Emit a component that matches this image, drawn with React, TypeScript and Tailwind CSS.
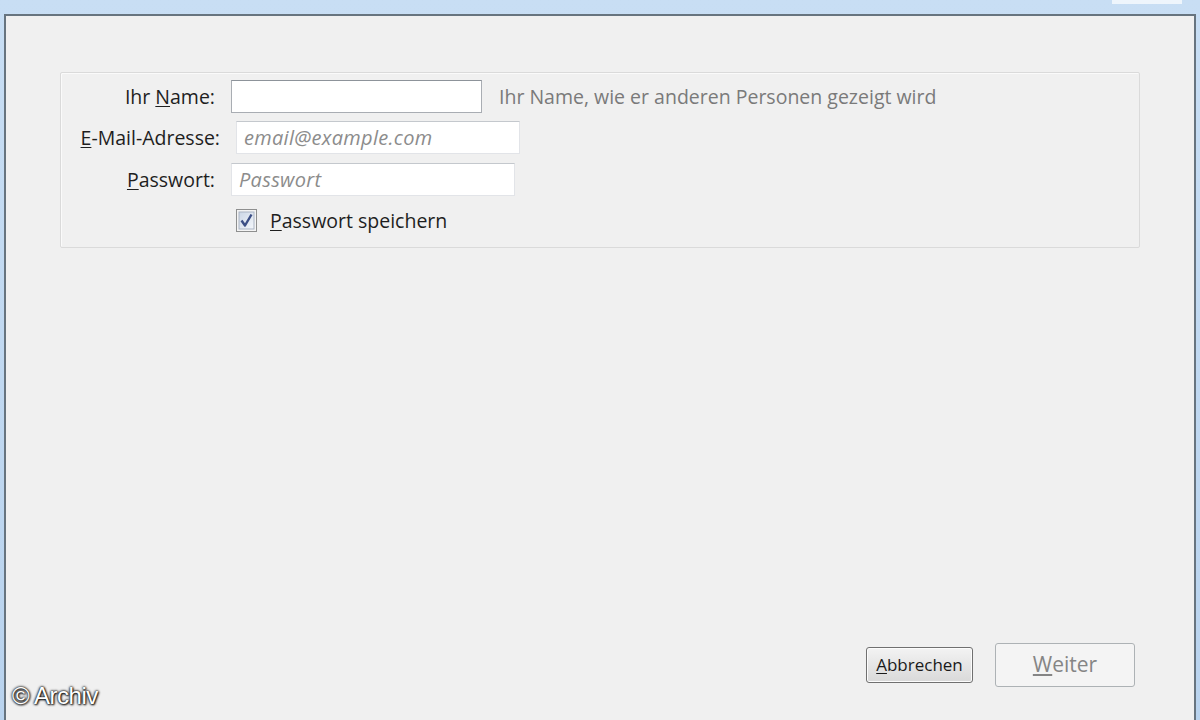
import React from "react";

const ui = { fontFamily: '"Open Sans", "Noto Sans", sans-serif' };

function Field({ labelW, gap, inputW, label, ul, rest, placeholder, focused }: {
  labelW: string; gap: string; inputW: string; label: string; ul: string; rest: string; placeholder?: string; focused?: boolean;
}) {
  return (
    <div className="flex items-center h-[33px]">
      <div className={`${labelW} text-right text-[19.5px] text-[#1e1e1e] leading-none whitespace-nowrap`}>
        {label}<span className="underline underline-offset-2">{ul}</span>{rest}
      </div>
      <div
        className={`${gap} ${inputW} h-[33px] bg-white flex items-center px-[7px] border ${
          focused ? "border-[#a9adb3] border-t-[#8d939a]" : "border-[#e2e4e8] border-t-[#c4c8cd]"
        }`}
      >
        {placeholder && <span className="text-[20px] italic text-[#8c8c8c] leading-none tracking-[0.3px]">{placeholder}</span>}
      </div>
    </div>
  );
}

export default function App() {
  return (
    <div
      className="relative w-[1200px] h-[720px] overflow-hidden bg-gradient-to-b from-[#c8def4] to-[#b9d3ee]"
      style={ui}
    >
      {/* title strip */}
      <div className="h-[14px] flex justify-end">
        <div className="w-[70px] h-[4px] mr-[18px] bg-[#eef5fc]" />
      </div>

      {/* dialog body */}
      <div className="ml-[4px] w-[1192px] h-[706px] border-l-2 border-t-2 border-r-2 border-[#67747f] bg-[#f0f0f0] pt-[56px] pl-[54px]">
        {/* form box */}
        <div className="w-[1080px] h-[176px] border border-[#dadada] rounded-[2px] shadow-[inset_1px_1px_0_#fafafa] pt-[7px] flex flex-col gap-[8px]">
          <div className="flex items-center">
            <Field labelW="w-[154px]" gap="ml-[16px]" inputW="w-[251px]" label="Ihr " ul="N" rest="ame:" focused />
            <span className="ml-[17px] text-[19.5px] text-[#7a7a7a] leading-none whitespace-nowrap">
              Ihr Name, wie er anderen Personen gezeigt wird
            </span>
          </div>
          <Field labelW="w-[159px]" gap="ml-[16px]" inputW="w-[284px]" label="" ul="E" rest="-Mail-Adresse:" placeholder="email@example.com" />
          <div className="mt-[1px]">
            <Field labelW="w-[154px]" gap="ml-[16px]" inputW="w-[284px]" label="" ul="P" rest="asswort:" placeholder="Passwort" />
          </div>
          <div className="flex items-center mt-[5px]">
            <div className="w-[175px]" />
            <svg width="21" height="23" viewBox="0 0 21 23">
              <rect x="0.5" y="0.5" width="20" height="22" fill="#f4f4f4" stroke="#8e8f8f" />
              <rect x="3" y="3" width="15" height="17" fill="url(#cb)" stroke="#aab4c4" />
              <defs>
                <linearGradient id="cb" x1="0" y1="0" x2="1" y2="1">
                  <stop offset="0" stopColor="#cbd6e6" />
                  <stop offset="1" stopColor="#f4f7fb" />
                </linearGradient>
              </defs>
              <path d="M5.5 11.5 L9 16.5 L15.5 5.5" fill="none" stroke="#3c4f86" strokeWidth="2.4" strokeLinejoin="round" />
            </svg>
            <span className="ml-[13px] text-[19.5px] text-[#1e1e1e] leading-none">
              <span className="underline underline-offset-2">P</span>asswort speichern
            </span>
          </div>
        </div>

        {/* buttons */}
        <div className="flex items-center justify-end w-[1075px] mt-[395px] gap-[22px]">
          <button className="w-[107px] h-[36px] rounded-[3px] border border-[#707070] bg-gradient-to-b from-[#f3f3f3] to-[#d9d9d9] shadow-[inset_0_0_0_1px_#fcfcfc] text-[17px] text-[#1a1a1a]">
            <span className="underline underline-offset-2">A</span>bbrechen
          </button>
          <button className="w-[140px] h-[44px] rounded-[3px] border border-[#adb2b5] bg-[#f4f4f4] text-[21px] text-[#858585]">
            <span className="underline underline-offset-2">W</span>eiter
          </button>
        </div>
      </div>

      {/* watermark */}
      <div
        className="absolute left-[12px] top-[684px] text-[24px] text-white leading-none tracking-[-0.5px]"
        style={{ fontFamily: '"Liberation Sans", Arial, sans-serif', textShadow: "0 0 3px #000, 0 0 2px #000, 1px 1px 2px #333" }}
      >
        © Archiv
      </div>
    </div>
  );
}
